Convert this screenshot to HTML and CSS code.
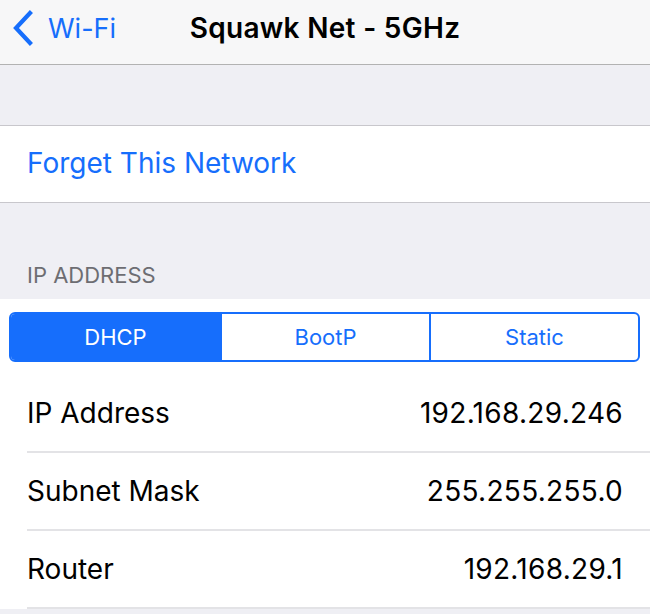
FILE: index.html
```html
<!DOCTYPE html>
<html>
<head>
<meta charset="utf-8">
<link rel="stylesheet" href="styles.css">
</head>
<body>
<div class="nav">
  <div class="back">
    <svg class="chev" width="26" height="36" viewBox="0 0 26 36"><polyline points="20,3 6,18 20,33" fill="none" stroke="#166efc" stroke-width="4.2" stroke-linecap="square" stroke-linejoin="miter"/></svg>
    <span class="back-label">Wi-Fi</span>
  </div>
  <div class="title">Squawk Net - 5GHz</div>
  <div class="spacer"></div>
</div>
<div class="gap"></div>
<div class="group">
  <div class="action">Forget This Network</div>
</div>
<div class="section-header">IP ADDRESS</div>
<div class="group group-open">
  <div class="seg-wrap">
    <div class="seg">
      <div class="seg-item active">DHCP</div>
      <div class="seg-item">BootP</div>
      <div class="seg-item">Static</div>
    </div>
  </div>
  <div class="row"><span class="label">IP Address</span><span class="value">192.168.29.246</span></div>
  <div class="row"><span class="label">Subnet Mask</span><span class="value">255.255.255.0</span></div>
  <div class="row"><span class="label">Router</span><span class="value">192.168.29.1</span></div>
</div>
</body>
</html>
```
FILE: styles.css
```css
html, body {
  margin: 0;
  padding: 0;
}
body {
  background: #efeff4;
  font-family: Inter, "Liberation Sans", Arial, sans-serif;
  width: 650px;
  height: 614px;
  overflow: hidden;
}
.nav {
  height: 64px;
  background: #f7f7f8;
  border-bottom: 1px solid #b2b2b2;
  display: grid;
  grid-template-columns: 1fr auto 1fr;
  align-items: center;
}
.back {
  display: flex;
  align-items: center;
  padding-left: 10px;
  color: #166efc;
  margin-top: -8px;
}
.chev {
  display: block;
}
.back-label {
  font-size: 27px;
  margin-left: 12px;
}
.title {
  font-size: 28px;
  font-weight: 600;
  letter-spacing: 0.3px;
  color: #000;
  margin-top: -8px;
}
.gap {
  height: 60px;
}
.group {
  background: #fff;
  border-top: 1px solid #c8c7cc;
  border-bottom: 1px solid #c8c7cc;
}
.group-open {
  border-top: none;
  border-bottom: none;
}
.action {
  height: 76px;
  display: flex;
  align-items: center;
  padding-left: 27px;
  font-size: 28px;
  color: #166efc;
  padding-bottom: 2px;
  box-sizing: border-box;
}
.section-header {
  height: 96px;
  box-sizing: border-box;
  padding: 0 0 11px 27px;
  display: flex;
  align-items: flex-end;
  font-size: 22px;
  color: #6d6d72;
}
.seg-wrap {
  padding: 13px 10px 13px 9px;
}
.seg {
  display: grid;
  grid-template-columns: 1fr 1fr 1fr;
  height: 50px;
  border: 2px solid #166efc;
  border-radius: 6px;
  overflow: hidden;
  box-sizing: border-box;
}
.seg-item {
  display: flex;
  align-items: center;
  justify-content: center;
  font-size: 22px;
  color: #166efc;
  border-left: 2px solid #166efc;
}
.seg-item:first-child {
  border-left: none;
}
.seg-item.active {
  background: #166efc;
  color: #fff;
}
.row {
  height: 78px;
  box-sizing: border-box;
  margin-left: 27px;
  padding-right: 27px;
  border-bottom: 2px solid #e3e3e6;
  display: flex;
  align-items: center;
  justify-content: space-between;
  font-size: 28px;
  color: #000;
}
.value {
  letter-spacing: 0.3px;
}
```
